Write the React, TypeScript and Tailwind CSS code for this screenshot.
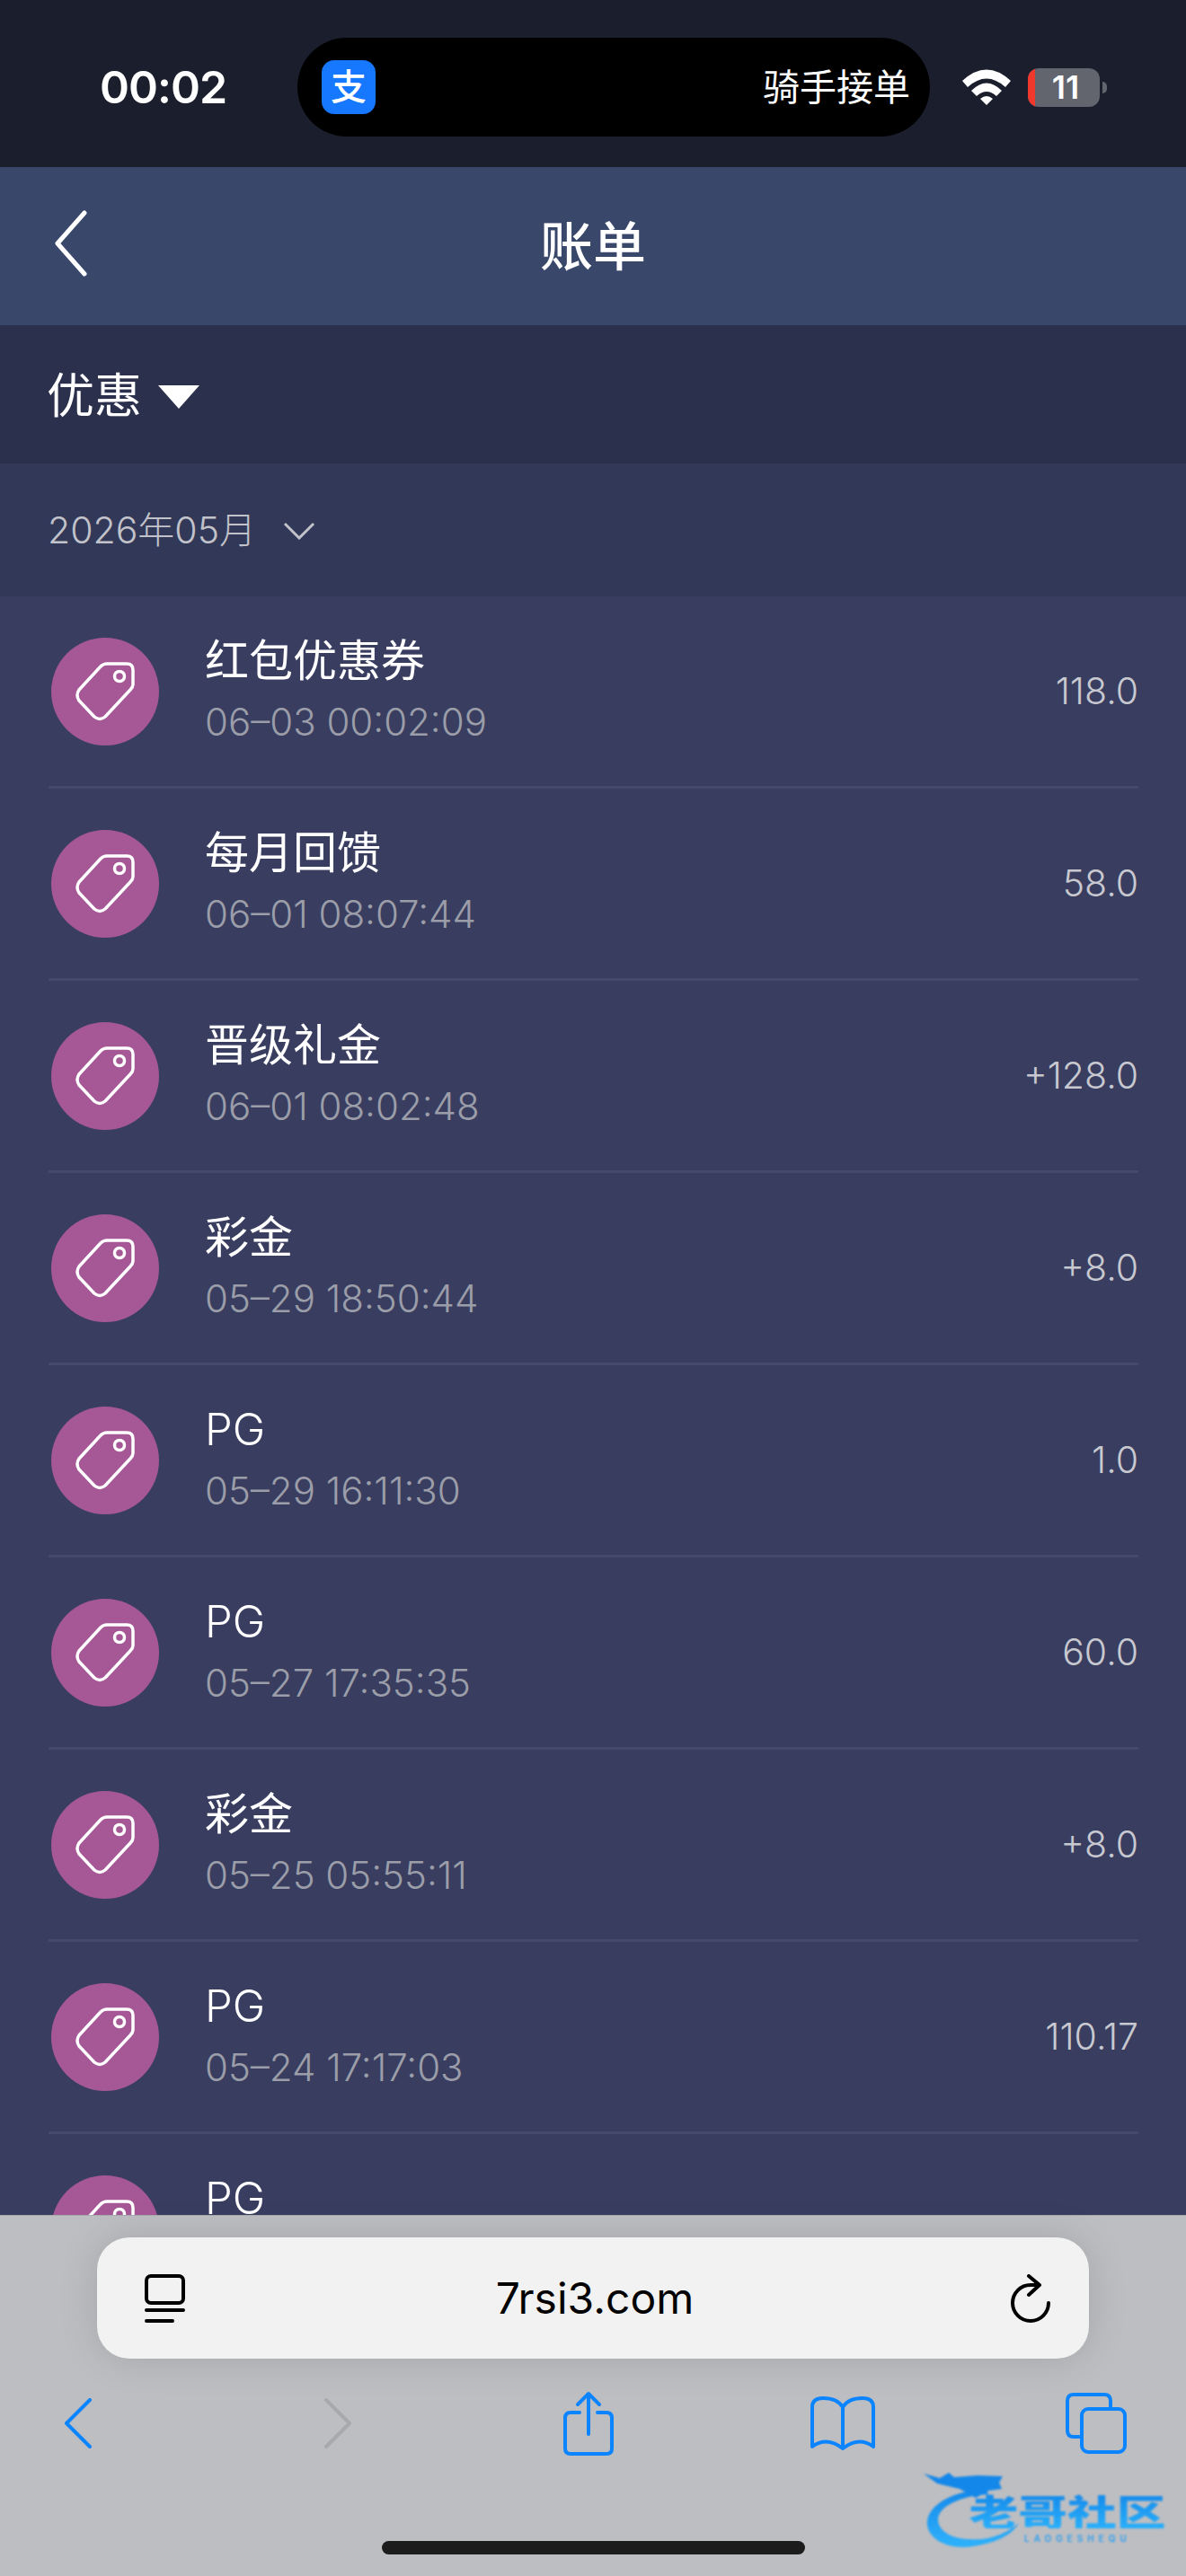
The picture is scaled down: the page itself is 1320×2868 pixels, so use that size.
const rows = [
  { title: "红包优惠券", time: "06–03 00:02:09", amount: "118.0" },
  { title: "每月回馈", time: "06–01 08:07:44", amount: "58.0" },
  { title: "晋级礼金", time: "06–01 08:02:48", amount: "+128.0" },
  { title: "彩金", time: "05–29 18:50:44", amount: "+8.0" },
  { title: "PG", time: "05–29 16:11:30", amount: "1.0" },
  { title: "PG", time: "05–27 17:35:35", amount: "60.0" },
  { title: "彩金", time: "05–25 05:55:11", amount: "+8.0" },
  { title: "PG", time: "05–24 17:17:03", amount: "110.17" },
  // cut off by the browser bar, only the title shows
  { title: "PG", time: "", amount: "" },
];

function TagIcon() {
  return (
    <svg width="68" height="68" viewBox="0 0 68 68" fill="none" stroke="white" strokeWidth="3.5" strokeLinejoin="round">
      <path d="M36 3 H58 Q65 3 65 10 V26 Q65 29 62 32 L34 62 Q28 67 22 62 L5 44 Q1 38 5 32 L29 6 Q32 3 36 3 Z" />
      <circle cx="50" cy="17" r="5.5" />
    </svg>
  );
}

function Row({ title, time, amount }: { title: string; time: string; amount: string }) {
  return (
    <div className="ml-[54px] mr-[53px] h-[214px] shrink-0 flex items-center border-b-[3px] border-[#454a6c]">
      <div className="w-[120px] h-[120px] ml-[3px] rounded-full bg-[#a65896] flex items-center justify-center shrink-0">
        <TagIcon />
      </div>
      <div className="ml-[51px] flex-1 pb-[4px]">
        <div className={title === "PG" ? "text-[49px] leading-[56px] font-light text-white" : "text-[49px] leading-[56px] font-normal text-white"}>{title}</div>
        <div className="mt-[16px] h-[48px] text-[42px] leading-[48px] font-light text-[#9b9da9]">{time}</div>
      </div>
      <div className="text-[41px] font-light text-[#c8c9d0]">{amount}</div>
    </div>
  );
}

function StatusBar() {
  return (
    <div className="h-[186px] bg-[#1b1e2c] shrink-0 flex items-center pl-[111px] pt-[8px]">
      <span className="w-[220px] text-[50px] tracking-[-1px] font-semibold text-white leading-none">00:02</span>
      <div className="w-[704px] h-[110px] rounded-full bg-black flex items-center justify-between pl-[27px] pr-[22px]">
        <div className="w-[60px] h-[60px] rounded-[14px] bg-[#1677ff] flex items-center justify-center text-white text-[40px] font-medium leading-none">支</div>
        <span className="text-[41px] font-normal text-white leading-none">骑手接单</span>
      </div>
      <svg className="ml-[36px]" width="54" height="40" viewBox="0 0 54 40" fill="white">
        <path d="M0 13 Q27 -12 54 13 L48 20 Q27 1 6 20 Z" />
        <path d="M10 24 Q27 7 44 24 L38 30 Q27 20 16 30 Z" />
        <path d="M20 33 Q27 27 34 33 L27 40 Z" />
      </svg>
      <div className="ml-[19px] w-[80px] h-[43px] rounded-[12px] bg-[#62646e] overflow-hidden relative flex items-center justify-center pl-[4px]">
        <div className="absolute left-0 top-0 bottom-0 w-[8px] bg-[#f0382c]" />
        <span className="text-[36px] font-semibold text-white leading-none">11</span>
      </div>
      <div className="ml-[3px] w-[5px] h-[13px] rounded-r-full bg-[#62646e]" />
    </div>
  );
}

function Watermark() {
  return (
    <div className="absolute left-[1028px] top-[284px] w-[272px] h-[90px] blur-[0.8px]">
      <svg className="absolute left-0 top-0" width="110" height="90" viewBox="0 0 110 90">
        <defs>
          <linearGradient id="ring" x1="0" y1="0" x2="0" y2="1">
            <stop offset="0" stopColor="#1488ea" />
            <stop offset="1" stopColor="#2fb2fb" />
          </linearGradient>
        </defs>
        <path fill="url(#ring)" d="M70 20 C30 22 2 40 4 60 C6 78 30 88 55 84 C80 80 98 72 106 58 C92 70 72 78 52 76 C30 76 16 66 16 54 C16 40 40 28 72 26 Z" />
        <path fill="#1488ea" d="M0 3 L18 8 L28 2 L34 7 L60 5 L88 6 L84 13 L87 20 L72 22 L58 30 L40 20 L15 14 Z" />
      </svg>
      <span className="absolute left-[50px] top-[24px] w-[220px] text-[40px] leading-none font-black text-center origin-center scale-x-[1.37] bg-gradient-to-b from-[#1488ea] to-[#2ab0fa] bg-clip-text text-transparent font-['Noto_Sans_CJK_SC',sans-serif] whitespace-nowrap">老哥社区</span>
      <span className="absolute left-[112px] top-[70px] text-[10px] leading-none tracking-[5px] text-[#2a9ff0] font-semibold">LAOGESHEQU</span>
    </div>
  );
}

function Toolbar() {
  return (
    <div className="h-[402px] shrink-0 bg-[#bdbec2] border-t border-[#a9aaae] relative">
      <div className="mx-[108px] mt-[24px] h-[135px] rounded-[36px] bg-[#f2f2f2] shadow-[0_0_44px_rgba(0,0,0,0.13)] grid grid-cols-[1fr_auto_1fr] items-center pl-[53px] pr-[43px]">
        <svg width="45" height="54" viewBox="0 0 45 54" fill="none" stroke="black" strokeWidth="4" strokeLinecap="round">
          <rect x="2" y="2" width="41" height="30" rx="5" />
          <path d="M2 40 H43 M2 52 H31" />
        </svg>
        <span className="text-[48px] text-black pr-[6px]">7rsi3.com</span>
        <svg className="justify-self-end" width="44" height="54" viewBox="0 0 44 54" fill="none" stroke="black" strokeWidth="4" strokeLinecap="round" strokeLinejoin="round">
          <path d="M42 32 A20 20 0 1 1 22 12 H30" />
          <path d="M20 2 L32 12 L20 23" />
        </svg>
      </div>
      <div className="flex items-center h-[72px] mt-[36px] pl-[72px]">
        <svg width="30" height="56" viewBox="0 0 30 56" fill="none" stroke="#0a84ff" strokeWidth="4" strokeLinecap="round" strokeLinejoin="round">
          <path d="M28 2 L2 28 L28 54" />
        </svg>
        <svg className="ml-[259px]" width="30" height="56" viewBox="0 0 30 56" fill="none" stroke="#a8a9ad" strokeWidth="4" strokeLinecap="round" strokeLinejoin="round">
          <path d="M2 2 L28 28 L2 54" />
        </svg>
        <svg className="ml-[236px]" width="56" height="72" viewBox="0 0 56 72" fill="none" stroke="#0a84ff" strokeWidth="4" strokeLinecap="round" strokeLinejoin="round">
          <path d="M18 24 H8 Q2 24 2 30 V64 Q2 70 8 70 H48 Q54 70 54 64 V30 Q54 24 48 24 H38" />
          <path d="M28 48 V3 M16 15 L28 3 L40 15" />
        </svg>
        <svg className="ml-[219px]" width="72" height="60" viewBox="0 0 72 60" fill="none" stroke="#0a84ff" strokeWidth="4" strokeLinecap="round" strokeLinejoin="round">
          <path d="M36 12 Q30 2 14 2 Q2 2 2 12 V56 Q18 44 36 58 Q54 44 70 56 V12 Q70 2 58 2 Q42 2 36 12 Z M36 12 V58" />
        </svg>
        <svg className="ml-[212px]" width="68" height="68" viewBox="0 0 68 68" fill="none" stroke="#0a84ff" strokeWidth="4" strokeLinejoin="round">
          <path d="M50 18 V9 Q50 2 43 2 H9 Q2 2 2 9 V42 Q2 49 9 49 H18" />
          <rect x="18" y="18" width="48" height="48" rx="7" />
        </svg>
      </div>
      <div className="absolute left-[425px] top-[362px] w-[471px] h-[15px] rounded-full bg-[#1c1c1c]" />
      <Watermark />
    </div>
  );
}

export default function App() {
  return (
    <div className="w-[1320px] h-[2868px] flex flex-col overflow-hidden font-['Inter','Noto_Sans_CJK_SC',sans-serif]">
      <StatusBar />
      <div className="h-[176px] shrink-0 bg-[#39476b] flex items-center relative justify-center">
        <svg className="absolute left-[60px] top-[48px]" width="38" height="74" viewBox="0 0 38 74" fill="none" stroke="white" strokeWidth="5" strokeLinecap="round" strokeLinejoin="round">
          <path d="M34 3 L4 37 L34 71" />
        </svg>
        <span className="text-[59px] font-medium text-white leading-none">账单</span>
      </div>
      <div className="h-[154px] shrink-0 bg-[#2b304d] flex items-center pl-[52px]">
        <span className="mt-[4px] text-[53px] font-normal text-white leading-none">优惠</span>
        <div className="ml-[18px] mt-[6px] w-0 h-0 border-l-[23px] border-r-[23px] border-t-[26px] border-l-transparent border-r-transparent border-t-white" />
      </div>
      <div className="h-[148px] shrink-0 bg-[#323858] flex items-center pl-[53px]">
        <span className="text-[41px] font-light text-[#c2c3ca] leading-none">2026年05月</span>
        <svg className="ml-[30px] mt-[2px]" width="36" height="20" viewBox="0 0 36 20" fill="none" stroke="#c2c3ca" strokeWidth="3">
          <path d="M2 2 L18 18 L34 2" />
        </svg>
      </div>
      <div className="flex-1 min-h-0 overflow-hidden bg-[#393e60] flex flex-col">
        {rows.map((r, i) => (
          <Row key={i} {...r} />
        ))}
      </div>
      <Toolbar />
    </div>
  );
}
